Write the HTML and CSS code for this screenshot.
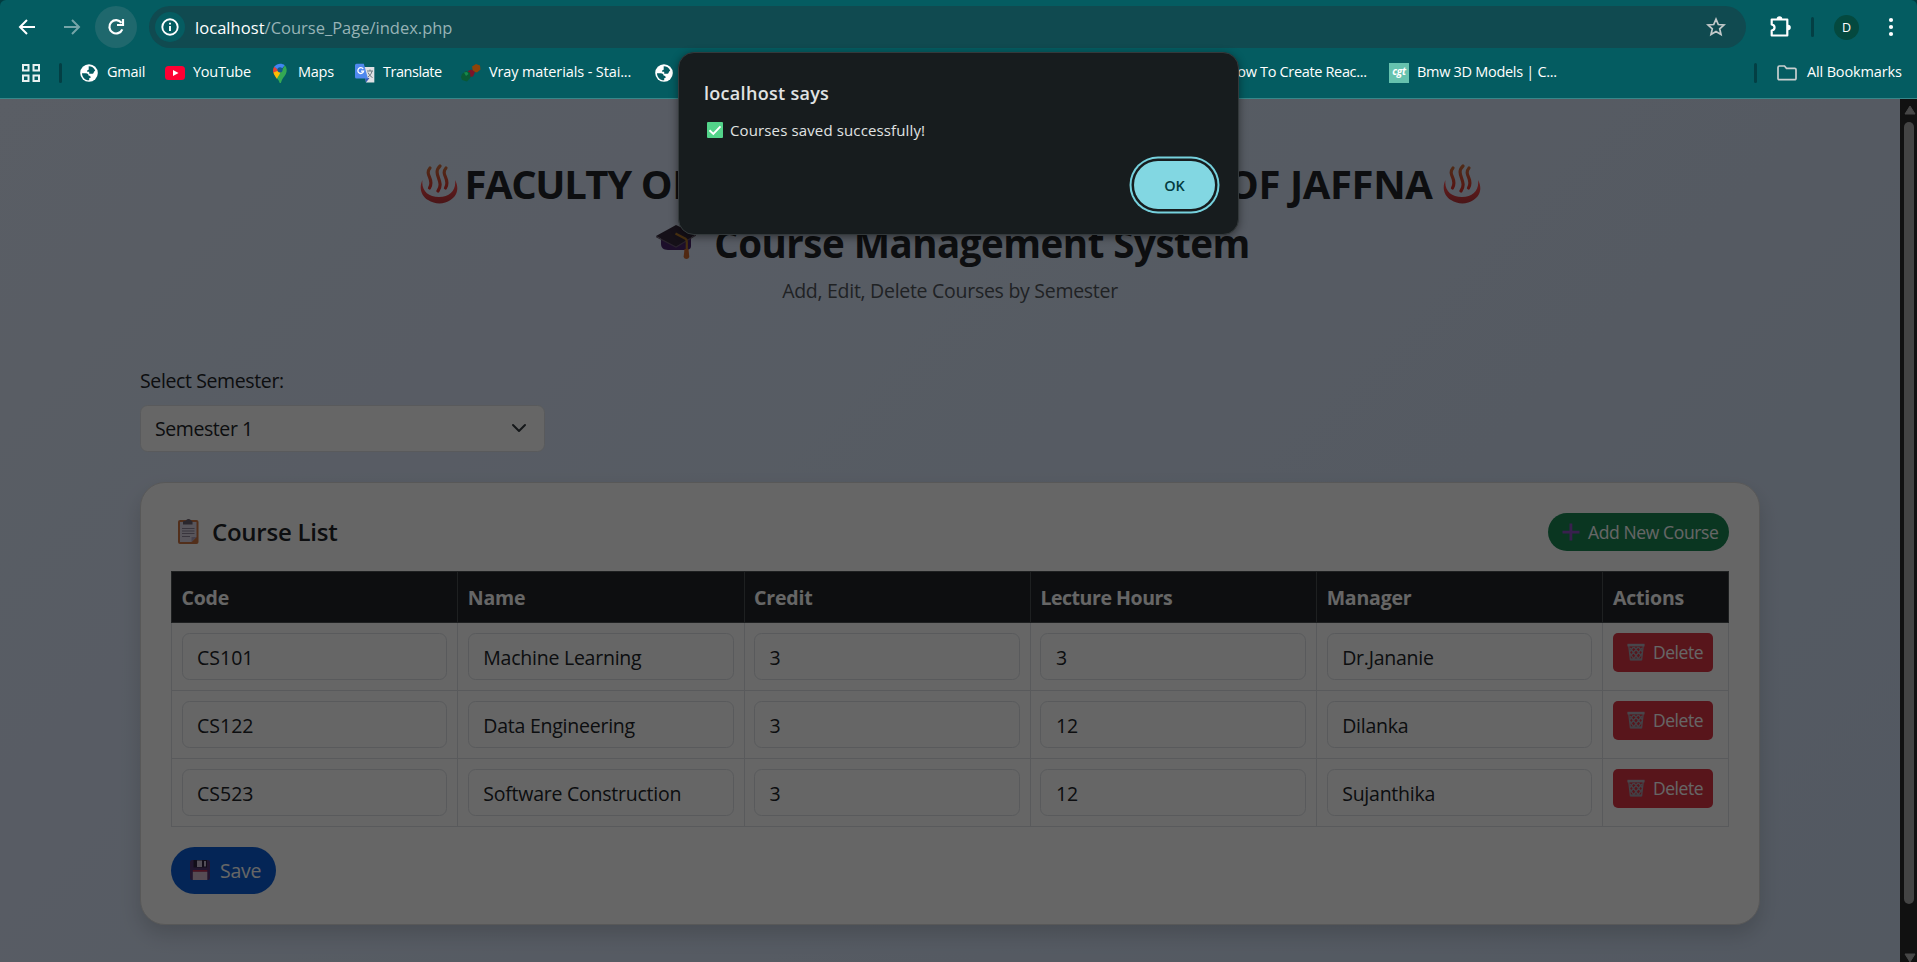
FILE: index.html
```html
<!DOCTYPE html>
<html lang="en">
<head>
<meta charset="utf-8">
<title>Course Management System</title>
<link rel="stylesheet" href="styles.css">
</head>
<body>
<svg class="defs" width="0" height="0">
  <defs>
    <linearGradient id="steam" x1="0" y1="0" x2="0" y2="1"><stop offset="0" stop-color="#c96a3a"/><stop offset="1" stop-color="#d8342f"/></linearGradient>
    <linearGradient id="bowl" x1="0" y1="0" x2="0" y2="1"><stop offset="0" stop-color="#ff4b4b"/><stop offset="1" stop-color="#b8363c"/></linearGradient>
    <symbol id="spring" viewBox="0 0 38 40">
      <path d="M2.500 16C-1 23 .500 31.500 8 36c7 4.500 16 4.500 22.500 0C38 31.500 39 23 35 16c1.500 10-5 17-16 17S1 26 2.500 16Z" fill="url(#bowl)"/>
      <g fill="none" stroke="url(#steam)" stroke-width="3.200" stroke-linecap="round"><path d="M10 4C4 11 15 15 9.500 24"/><path d="M20 2C11.500 10 25 17 18 27"/><path d="M26 4c-6 7 5 11-.500 20"/></g>
    </symbol>
    <symbol id="globe" viewBox="0 0 18 18">
      <circle cx="9" cy="9" r="8.800" fill="#fff"/>
      <path d="M2 9.200h3.800c2 0 2.700 1 2.700 2.200 1.600.1 2.200.8 2.200 2.400l-1.500.4v2C5.500 16.500 2 13.500 2 9.200ZM8.700 2.200c3 0 5.300 1.500 6.500 4.200l-1 1.100c-.8 1-.3 2.200-1.800 2.200H9.200V7.800H7.100c0-1.400.3-2.100 1.600-2.100Z" fill="#055c61"/>
      <path d="M11.500 13.500c0-1.300 1-2.300 3.800-2.300-.5 1.800-1.900 3.300-3.800 4.100Z" fill="#fff"/>
    </symbol>
    <symbol id="trash" viewBox="0 0 18 18">
      <g fill="none" stroke="#a9a3b0" stroke-width="1.300"><path d="M1.800 3l1.600 13.500h11.200L16.200 3"/><path d="M3 5l8.500 11M7 4l7.500 9M11.500 4l4 5M2.800 10l4 6M15 5L6.500 16M11 4l-7.500 9M6.500 4L2.500 9M15.200 10l-4 6"/></g>
      <path d="M.4.800h17.200v2.600H.4Z" fill="#b5afbb"/><path d="M3 15.500h12l-.3 2H3.300Z" fill="#a39daa"/>
    </symbol>
  </defs>
</svg>

<header class="browser">
  <div class="toolbar">
    <div class="nav"><svg width="18" height="18" viewBox="0 0 18 18" fill="none" stroke="#fff" stroke-width="2"><path d="M17 9H2.500M9 2 2 9l7 7"/></svg></div>
    <div class="nav forward"><svg width="18" height="18" viewBox="0 0 18 18" fill="none" stroke="#fff" stroke-width="2"><path d="M1 9h14.500M9 2l7 7-7 7"/></svg></div>
    <div class="reload"><svg width="20" height="20" viewBox="0 0 20 20" fill="none" stroke="#fff" stroke-width="2.200"><path d="M16.300 12.300A6.700 6.700 0 1 1 15.500 5.800"/><path d="M17 2v6h-6" /></svg></div>
    <div class="address">
      <div class="info"><svg width="18" height="18" viewBox="0 0 18 18"><circle cx="9" cy="9" r="7.700" fill="none" stroke="#fff" stroke-width="1.900"/><path d="M9 8v5M9 4.700v1.900" stroke="#fff" stroke-width="1.900"/></svg></div>
      <div class="url"><b>localhost</b><span>/Course_Page/index.php</span></div>
      <svg class="star" width="20" height="20" viewBox="0 0 20 20" fill="none" stroke="#c3c9ca" stroke-width="1.700"><path d="M10 2.200l2.300 5.300 5.700.5-4.300 3.800 1.300 5.700-5-3-5 3 1.300-5.700L2 8l5.700-.5Z"/></svg>
    </div>
    <svg class="puzzle" width="24" height="24" viewBox="0 0 24 24"><path d="M3.700 5.500h15.600v16H3.700v-5c3.800-.7 3.800-5.300 0-6Z" fill="none" stroke="#fff" stroke-width="2.200" stroke-linejoin="round"/><path d="M8.700 5a2.800 2.800 0 0 1 5.600 0ZM20 10.700a2.800 2.800 0 0 1 0 5.600Z" fill="#fff"/></svg>
    <i class="bar"></i>
    <div class="avatar">D</div>
    <svg class="dots" width="6" height="20" viewBox="0 0 6 20" fill="#fff"><circle cx="3" cy="3" r="2.100"/><circle cx="3" cy="10" r="2.100"/><circle cx="3" cy="17" r="2.100"/></svg>
  </div>
  <div class="bookmarks">
    <svg class="apps" width="18" height="18" viewBox="0 0 18 18" fill="none" stroke="#e9f1f1" stroke-width="2"><path d="M1 1h5.500v5.500H1ZM11.500 1H17v5.500h-5.500ZM1 11.500h5.500V17H1ZM11.500 11.500H17V17h-5.500Z"/></svg>
    <i class="bar"></i>
    <div class="mark gmail"><svg viewBox="0 0 18 18"><use href="#globe"/></svg><span>Gmail</span></div>
    <div class="mark youtube"><svg viewBox="0 0 20 20"><rect y="3" width="20" height="14" rx="3.500" fill="#ff0033"/><path d="M8 7l5.500 3L8 13Z" fill="#fff"/></svg><span>YouTube</span></div>
    <div class="mark maps"><svg viewBox="0 0 20 20"><path d="M4.500 12C2.500 9 2.600 6 4.300 3.500L10 8Z" fill="#ea4335"/><path d="M4.200 3.700C7 0 12 0 14.800 2.200L10 8 7.500 6.200Z" fill="#4285f4"/><path d="M3.500 9.500 10 7l1 4-4 5c-1.400-2-2.700-3.700-3.500-6.500Z" fill="#fbbc04"/><path d="M14.800 2.200c2.200 2.500 2.500 5.800 1 8.800-1.700 3.200-3.900 4.800-4.900 9H9.700C9.200 18 8.300 17 7 15.500Z" fill="#34a853"/><circle cx="10" cy="6.800" r="2.600" fill="#125a8b"/></svg><span>Maps</span></div>
    <div class="mark translate"><svg viewBox="0 0 20 20"><path d="M9 4h10.300v15.500H11Z" fill="#dfe1e4"/><path d="M10 15h4.500l-3.500 4.500Z" fill="#3a5bb8"/><path d="M1.500.8h7.300L13 15.500H1.500A1.500 1.500 0 0 1 0 14V2.300A1.500 1.500 0 0 1 1.500.8Z" fill="#5089ee"/><path d="M8.200 6A2.900 2.900 0 1 0 8.600 8.200H6" fill="none" stroke="#fff" stroke-width="1.300"/><path d="M12 8h6M15 6.500V8M17 8c-.5 3-2.500 5-4 6M13 9.500c1 2 2.500 4 4.500 5" fill="none" stroke="#6c7a80" stroke-width="1"/></svg><span>Translate</span></div>
    <div class="mark vray"><svg viewBox="0 0 20 20"><path d="M11 3.500 15 1l4 1.500.5 4L16 9.500l-4-1Z" fill="#8f4308"/><path d="M7 8l3.500-1.500L14 9l-2 4.500-4 .5Z" fill="#7c1428"/><path d="M1 11l4-3 4 1.500.5 5L6 18.500 1 17 0 14Z" fill="#0a5a35"/><path d="M3 9.500 6 9l1.500 2L5 13Z" fill="#168a4c"/></svg><span>Vray materials - Stai...</span></div>
    <div class="mark covered"><svg viewBox="0 0 18 18"><use href="#globe"/></svg></div>
    <div class="mark how"><i class="blank"></i><span>How To Create Reac...</span></div>
    <div class="mark bmw"><i class="cgt">cgt</i><span>Bmw 3D Models | C...</span></div>
    <i class="bar last"></i>
    <svg class="folder" width="20" height="16" viewBox="0 0 20 16" fill="none" stroke="#c9cfd0" stroke-width="1.700"><path d="M2.500 1h5l2 2.300h8.300A1.200 1.200 0 0 1 19 4.500v9a1.200 1.200 0 0 1-1.200 1.200H2.200A1.200 1.200 0 0 1 1 13.500v-11A1.500 1.500 0 0 1 2.500 1Z"/></svg>
    <span class="all">All Bookmarks</span>
  </div>
</header>

<div class="viewport">
  <main class="page">
    <h1><svg width="38" height="40"><use href="#spring"/></svg><span class="faculty"><span class="tight">FACULTY</span> OF</span><span>OF JAFFNA</span><svg width="38" height="40"><use href="#spring"/></svg></h1>
    <h2><svg width="40" height="36" viewBox="0 0 40 36"><path d="M5 12h30v9c0 2-1 4-6 4H12c-5 0-7-3-7-6Z" fill="#49256b"/><path d="M0 11 20 0l20 9.500-20 12Z" fill="#362a3c"/><path d="M0 11l20 10.500L40 9.500v1.200L20 22.800 0 12.200Z" fill="#67596c"/><path d="M19.500 8.500l10 5.200c1 .6 1.300 1.300 1.300 3V25" fill="none" stroke="#b47828" stroke-width="2.200"/><path d="M28.500 24h4l.8 8a3 3 0 0 1-5.700 0Z" fill="#c8652e"/></svg><span>Course Management System</span></h2>
    <p class="lead">Add, Edit, Delete Courses by Semester</p>

    <div class="picker">
      <label>Select Semester:</label>
      <div class="select"><span>Semester 1</span><svg width="16" height="10" viewBox="0 0 16 10" fill="none" stroke="#343a40" stroke-width="2" stroke-linecap="round" stroke-linejoin="round"><path d="M2 2l6 6 6-6"/></svg></div>
    </div>

    <section class="card">
      <div class="card-head">
        <h5><svg width="21" height="25" viewBox="0 0 21 25"><rect y="1" width="20.500" height="24" rx="2" fill="#ce7745"/><path d="M2 3h16.500v15l-5 5H2Z" fill="#dcd4e4"/><path d="M18.500 18h-5v5Z" fill="#b0a4bd"/><path d="M5 5.500V2.800C5 2 7 2 8 1.500c1-2 4-2 5 0 1 .5 1.500.5 1.500 1.300v2.700Z" fill="#6c6270"/><path d="M4 9.500h12.500M4 12h12.500M4 14.500h12.500M4 17.500h8" stroke="#8e8499" stroke-width="1"/></svg><span>Course List</span></h5>
        <div class="btn add"><svg width="18" height="18" viewBox="0 0 18 18"><path d="M7.500.5h2.800v7.200h7.200v2.700h-7.200v7.100H7.500v-7.100H.5V7.700h7Z" fill="#8f52c4"/></svg><span>Add New Course</span></div>
      </div>
      <table>
        <thead><tr><th class="c1">Code</th><th class="c2">Name</th><th class="c3">Credit</th><th class="c4">Lecture Hours</th><th class="c5">Manager</th><th class="c6">Actions</th></tr></thead>
        <tbody>
          <tr><td><div class="field num">CS101</div></td><td><div class="field">Machine Learning</div></td><td><div class="field num">3</div></td><td><div class="field num">3</div></td><td><div class="field">Dr.Jananie</div></td><td><div class="btn delete"><svg width="18" height="18"><use href="#trash"/></svg><span>Delete</span></div></td></tr>
          <tr><td><div class="field num">CS122</div></td><td><div class="field">Data Engineering</div></td><td><div class="field num">3</div></td><td><div class="field num">12</div></td><td><div class="field">Dilanka</div></td><td><div class="btn delete"><svg width="18" height="18"><use href="#trash"/></svg><span>Delete</span></div></td></tr>
          <tr><td><div class="field num">CS523</div></td><td><div class="field">Software Construction</div></td><td><div class="field num">3</div></td><td><div class="field num">12</div></td><td><div class="field">Sujanthika</div></td><td><div class="btn delete"><svg width="18" height="18"><use href="#trash"/></svg><span>Delete</span></div></td></tr>
        </tbody>
      </table>
      <div class="btn save"><svg width="20" height="20" viewBox="0 0 20 20"><rect width="20" height="20" rx="2" fill="#533878"/><path d="M3.500 0h13.500v7.500H3.500Z" fill="#2d2240"/><path d="M7 .5h5V7H7ZM14 1h2v5.500h-2Z" fill="#cfc3dc"/><path d="M2.800 10h14.500v1.800H2.800Z" fill="#c03052"/><path d="M2.800 11.800h14.500V20H2.800Z" fill="#d8bed2"/></svg><span>Save</span></div>
    </section>
  </main>
  <div class="scrollbar">
    <svg width="12" height="10" viewBox="0 0 12 10"><path d="M6 1 11 9H1Z" fill="#474747" stroke="#474747" stroke-linejoin="round"/></svg>
    <div class="thumb"></div>
    <svg width="12" height="10" viewBox="0 0 12 10"><path d="M6 9 11 1H1Z" fill="#474747" stroke="#474747" stroke-linejoin="round"/></svg>
  </div>
</div>

<div class="dialog">
  <div class="title">localhost says</div>
  <div class="message"><svg width="16" height="16" viewBox="0 0 16 16"><rect width="16" height="16" rx="1" fill="#53d38a"/><path d="M2.500 8.300l3.800 3.600 7.200-7.500" fill="none" stroke="#fff" stroke-width="1.900"/></svg><span>Courses saved successfully!</span></div>
  <div class="ok">OK</div>
</div>
</body>
</html>
```
FILE: styles.css
```css
*{box-sizing:border-box}
body{margin:0;width:1917px;height:962px;overflow:hidden;position:relative;display:flex;flex-direction:column;background:#023c40;font-family:"Open Sans","Noto Sans",sans-serif;white-space:nowrap}
svg{display:block;flex:none}
.defs{position:absolute}

/* browser chrome */
.browser{height:99px;flex:none;background:#045c61;border-bottom:1px solid #38878a;border-radius:6px 6px 0 0;color:#fff}
.toolbar{height:48px;padding:6px 0 0 4px;display:flex;align-items:center}
.nav{width:45px;display:flex;justify-content:center}
.forward{opacity:.45}
.reload{width:42px;height:42px;margin-left:1px;border-radius:50%;background:#1f686d;display:flex;align-items:center;justify-content:center}
.address{width:1597px;height:42px;margin-left:12px;border-radius:21px;background:#104a50;display:flex;align-items:center;padding:0 20px 0 6px}
.info{width:30px;height:30px;border-radius:50%;background:#055c61;display:flex;align-items:center;justify-content:center}
.url{margin-left:10px;padding-top:1px;font-size:16.5px;line-height:24px}
.url b{font-weight:400;letter-spacing:.05px}
.url span{color:#97b3b6;letter-spacing:0}
.star{margin-left:auto}
.puzzle{margin:-2px 0 0 22px}
.bar{width:3px;height:20px;border-radius:2px;background:#033f44;flex:none}
.toolbar .bar{margin-left:19px}
.avatar{width:25px;height:25px;margin-left:20px;border-radius:50%;background:#04493f;font-size:12.5px;line-height:25px;text-align:center}
.dots{margin-left:29px}
.bookmarks{height:50px;display:flex;align-items:center;padding-left:22px;font-size:14.5px;letter-spacing:-.25px}
.bookmarks span{line-height:20px;padding-bottom:2px}
.bookmarks .bar{margin:0 17px 0 19px}
.mark{display:flex;align-items:center;gap:8px;flex:none}
.mark svg{width:20px;height:20px}
.gmail svg,.covered svg{width:18px;height:18px;margin:0 1px}
.gmail{width:86px}.youtube{width:105px}.maps{width:85px}.translate{width:106px;letter-spacing:-.45px}
.vray{width:193px;letter-spacing:-.12px}.covered{width:545px}.how{width:190px;letter-spacing:-.34px}
.bmw{letter-spacing:-.3px}
.blank{width:20px}
.cgt{width:20px;height:20px;background:#66c2ae;color:#fff;font:italic 700 10px/17px "Open Sans",sans-serif;text-align:center;letter-spacing:-.2px}
.bookmarks .last{margin:0 20px 0 auto}
.all{width:110px;margin-left:10px;letter-spacing:-.15px}

/* page */
.viewport{flex:1;min-height:0;display:flex}
.page{flex:1;position:relative;overflow:hidden;padding:60.500px 140px 0;background:linear-gradient(135deg,#e0eafc,#cfdef3);color:#212529;font-size:19.5px;line-height:30px;letter-spacing:-.24px}
.page::after{content:"";position:absolute;inset:0;background:rgba(0,0,0,.6)}
h1,h2,h5,p{margin:0}
h1,h2{height:48px;display:flex;align-items:center;justify-content:center;line-height:48px;font-weight:700}
h1{width:1061px;margin:0 auto;gap:10px;font-size:40px;letter-spacing:-.4px}
.faculty{margin:0 auto 0 -3px}
.tight{letter-spacing:-1.400px}
h2{margin-top:11px;gap:18px;padding-left:6px;font-size:38.5px;letter-spacing:-.5px}
.lead{margin-top:9px;text-align:center;color:#50555b;letter-spacing:-.28px}
.picker{margin-top:60px;width:405px}
.picker label{display:block;letter-spacing:-.38px}
.select{height:47px;margin:9px 0 0;border:1px solid #dee2e6;border-radius:7.5px;background:#fff;display:flex;align-items:center;justify-content:space-between;padding:0 17px 0 14px;letter-spacing:-.42px}
.select span{padding-top:2px}
.card{margin-top:30px;height:443px;border:1px solid #dcdcdc;border-radius:25px;background:#fff;box-shadow:0 10px 20px rgba(0,0,0,.15);padding:30px}
.card-head{display:flex;justify-content:space-between;align-items:center;height:38px}
h5{display:flex;align-items:center;gap:13px;margin-left:7px;font-size:24px;font-weight:600;letter-spacing:-.25px}
h5 span{padding-top:1px}
.btn{display:flex;align-items:center;color:#fff}
.add{width:181px;height:38px;border-radius:19px;background:#198754;padding-left:14px;gap:8px;font-size:17.5px;letter-spacing:-.38px}
table{table-layout:fixed;width:1558px;margin-top:20px;border-collapse:collapse}
th,td{border:1px solid #dee2e6;padding:10px 10px 10px 9.5px;vertical-align:top;text-align:left}
th{background:#212529;border-color:#4d5154;color:#fff;font-weight:700;letter-spacing:-.2px;padding-top:11px;padding-bottom:9px}
.c1,.c2,.c3,.c4,.c5{width:286.300px}
.c4{letter-spacing:-.45px}
.field{height:47px;border:1px solid #dee2e6;border-radius:7.5px;padding:9px 14.5px}
.num{letter-spacing:0}
.delete{width:100px;height:39px;border-radius:5px;background:#dc3545;padding-left:14px;gap:8px;font-size:17.5px;letter-spacing:-.45px}
.save{width:105px;height:47px;margin-top:20px;border-radius:24px;background:#0b5ed7;padding-left:19px;gap:10px}
.save span{padding-top:2px}

/* scrollbar */
.scrollbar{width:17px;flex:none;background:#111;display:flex;flex-direction:column;align-items:center;padding:6px 0 0 1px;overflow:hidden}
.scrollbar svg{margin-left:1px}
.thumb{width:10px;height:782px;margin:7px 0 49px;border-radius:5px;background:#444;flex:none}

/* alert dialog */
.dialog{position:absolute;left:678px;top:51.500px;width:561px;height:183px;border-radius:16px;background:#171c1e;border:1px solid #33393b;box-shadow:0 2px 8px rgba(0,0,0,.45);color:#e0e3e3;padding:27px 19px 0 25px;display:flex;flex-direction:column}
.title{font-size:18px;font-weight:600;line-height:26px;letter-spacing:.3px;height:26px}
.message{display:flex;align-items:center;gap:7px;padding-left:3px;height:24px;margin-top:12.500px;font-size:15px;letter-spacing:.13px}
.ok{align-self:flex-end;width:81px;height:48px;margin:19px 4px 0 0;border-radius:25px;background:#82d7e2;color:#023b40;box-shadow:0 0 0 2.500px #171c1e,0 0 0 4.500px #76d1dd;font-size:14.5px;font-weight:600;line-height:49px;text-align:center}
```
